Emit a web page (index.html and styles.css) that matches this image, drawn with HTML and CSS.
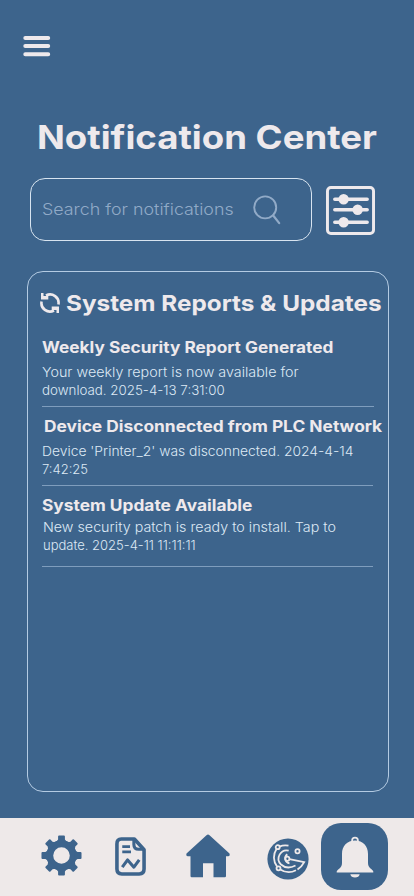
FILE: index.html
```html
<!DOCTYPE html>
<html lang="en">
<head>
<meta charset="utf-8">
<meta name="viewport" content="width=device-width, initial-scale=1">
<title>Notification Center</title>
<link rel="stylesheet" href="styles.css">
</head>
<body>
<div class="app">
  <header class="header">
    <svg class="menu" viewBox="0 0 28 22"><path d="M2.300 3h22.900M2.300 11h22.900M2.300 19.200h22.900" stroke="currentColor" stroke-width="4" stroke-linecap="round"/></svg>
    <h1><span class="fit title">Notification Center</span></h1>
  </header>
  <div class="tools">
    <div class="search">
      <span class="fit hint">Search for notifications</span>
      <svg class="lens" viewBox="0 0 28 30" fill="none" stroke="currentColor" stroke-width="1.9" stroke-linecap="round"><circle cx="12.2" cy="12.4" r="11"/><path d="M20.2 20.5l6 7.600" stroke-width="2.2"/></svg>
    </div>
    <svg class="filter" viewBox="0 0 50 50"><rect x="1.500" y="1.500" width="47" height="47" rx="3.500" fill="none" stroke="currentColor" stroke-width="3"/><path d="M9 13.500h33M9 24.200h33M9 37h33" stroke="currentColor" stroke-width="3.600" stroke-linecap="round"/><g fill="currentColor"><circle cx="18" cy="13.500" r="5.300"/><circle cx="32.300" cy="24.200" r="5.300"/><circle cx="18" cy="37" r="5.300"/></g></svg>
  </div>
  <main class="panel">
    <h2>
      <svg class="sync" viewBox="0 0 22 22" fill="none" stroke="currentColor" stroke-width="2.600"><path d="M7 3.500A8.500 8.500 0 0 1 19.400 12.600M15 18.500A8.500 8.500 0 0 1 2.600 9.400"/><path fill="currentColor" stroke="none" d="M2 1h2.500v3L9.300 4v3.400H2zM20 21h-2.500v-3L12.700 18v-3.400H20z"/></svg>
      <span class="fit section">System Reports &amp; Updates</span>
    </h2>
    <article class="item report">
      <h3><span class="fit">Weekly Security Report Generated</span></h3>
      <p><span class="fit lead">Your weekly report is now available for</span><br><span class="fit rest">download. 2025-4-13 7:31:00</span></p>
    </article>
    <article class="item device">
      <h3><span class="fit">Device Disconnected from PLC Network</span></h3>
      <p><span class="fit lead">Device 'Printer_2' was disconnected. 2024-4-14</span><br><span class="fit rest">7:42:25</span></p>
    </article>
    <article class="item update">
      <h3><span class="fit">System Update Available</span></h3>
      <p><span class="fit lead">New security patch is ready to install. Tap to</span><br><span class="fit rest">update. 2025-4-11 11:11:11</span></p>
    </article>
  </main>
  <nav class="nav">
    <svg class="gear" viewBox="-21 -21 42 42"><g fill="currentColor"><path fill-rule="evenodd" d="M0-15.500a15.500 15.500 0 1 0 0 31a15.500 15.500 0 0 0 0-31zm0 7a8.500 8.500 0 1 1 0 17a8.500 8.500 0 0 1 0-17z"/><g id="teeth"><path id="tooth" d="M-6-13l2.500-3.500v-3q0-1 1-1h5q1 0 1 1v3l2.500 3.500z"/><use href="#tooth" transform="rotate(45)"/><use href="#tooth" transform="rotate(90)"/><use href="#tooth" transform="rotate(135)"/></g><use href="#teeth" transform="rotate(180)"/></g></svg>
    <svg class="doc" viewBox="0 0 32 40" fill="none" stroke="currentColor" stroke-width="3.700" stroke-linejoin="round"><path d="M6.500 2H20l10 11v20q0 5-5 5H7q-5 0-5-5V7q0-5 4.500-5z"/><path d="M19.500 3v4.500q0 5 5 5H30" stroke-width="3.200"/><path d="M7.500 9.800h8M7.500 15.300h9" stroke-width="2.900"/><path d="M7.500 31l5.500-7.500 6.500 7.500 5.500-7.500" stroke-width="3.200"/></svg>
    <svg class="home" viewBox="0 0 44 44"><path fill="currentColor" d="M20.500 1.200q1.500-1.200 3 0L43.500 19.500q.8 2.800-1.500 2.800h-2V42q0 1.200-1.200 1.200H27.500V29.200H17V43.200H5.700q-1.200 0-1.200-1.200V22.300H2Q-.3 22.300.5 19.500z"/></svg>
    <svg class="radar" viewBox="0 0 42 42"><circle cx="21" cy="21" r="20.600" fill="currentColor"/><g fill="none" stroke="#eee9e9" stroke-width="1.800"><path d="M12.500 8.600Q16.500 6.800 21.500 7.700M9.500 11A15 15 0 0 0 10 28.500M13.300 31.500Q21 36.500 29 32.200M21.700 12.700A8.200 8.200 0 0 0 14 26.500Q20 32 28.500 27.500M20.300 16.300A5 5 0 0 0 22.500 25.300M22.400 21.100L37.200 24.200Q35 28.500 30.500 31.500"/><circle cx="10.700" cy="9.200" r="2"/><circle cx="30.500" cy="13.300" r="2.100"/><circle cx="20.300" cy="20.700" r="2.100"/><circle cx="11.500" cy="30.300" r="2"/></g></svg>
    <div class="active"><svg class="bell" viewBox="0 0 38 42"><circle cx="19" cy="4.500" r="2.900" fill="none" stroke="currentColor" stroke-width="1.700"/><path fill="currentColor" d="M19 4.500C27 4.500 32 10 32 18v9q0 4 3.500 6.300Q38 35.700 37.200 36.500H.8Q0 35.700 2.500 33.300 6 31 6 27v-9C6 10 11 4.500 19 4.500zM14.300 38.200h9.400q-.8 3.300-4.700 3.300t-4.700-3.300z"/></svg></div>
  </nav>
</div>
</body>
</html>
```
FILE: styles.css
```css
* { box-sizing: border-box; }
body { margin: 0; background: #3d648c; color: #eee9ec; font-family: Inter, "Liberation Sans", sans-serif; }
svg { display: block; flex: none; }
h1, h2, h3, p { margin: 0; }
.app { width: 414px; height: 896px; display: flex; flex-direction: column; overflow: hidden; }
.header { height: 177px; padding: 35px 0 0 23px; }
.menu { width: 28px; height: 22px; }
.fit { display: inline-block; white-space: nowrap; transform-origin: left center; }
.title { transform: scaleX(1.108); }
h1 { margin: 60px 0 0 14px; font-size: 33px; line-height: 40px; font-weight: 700; }
.tools { display: flex; align-items: center; padding-left: 30px; gap: 14px; height: 65px; }
.search { width: 282px; height: 63px; border: 1px solid #d8e4f0; border-radius: 15px; display: flex; align-items: center; padding-left: 11px; color: #91aac7; }
.hint { width: 211px; font-size: 16px; line-height: 24px; font-weight: 300; transform: translateY(-1px) scaleX(1.116); }
.lens { width: 28px; height: 30px; }
.filter { width: 49px; height: 49px; margin-top: 2px; }
.panel { width: 362px; height: 521px; margin: 29px 0 0 27px; padding: 17px 0 0 13px; border: 1px solid #b4cbe3; border-radius: 16px; }
h2 { display: flex; align-items: center; height: 27px; gap: 5px; font-size: 22px; font-weight: 700; }
.section { transform: scaleX(1.105); }
.sync { width: 22px; height: 22px; margin-left: -2px; }
.item { width: 332px; border-bottom: 1px solid #7f9dbd; margin-left: 1px; }
h3 { font-size: 15.5px; line-height: 20px; font-weight: 700; white-space: nowrap; }
p { font-size: 13px; line-height: 18px; font-weight: 300; color: #dde9f5; }
.report { height: 91px; padding-top: 22px; }
.report h3 .fit { transform: scaleX(1.113); }
.report p { margin-top: 5px; }
.report .lead { transform: scaleX(1.1); }
.report .rest { transform: scaleX(1.025); }
.device { width: 331px; height: 79px; padding-top: 10px; }
.device h3 { margin-left: 2px; }
.device h3 .fit { transform: scaleX(1.119); }
.device p { margin-top: 5px; }
.device .lead { transform: scaleX(1.065); }
.update { width: 331px; height: 81px; padding-top: 10px; }
.update h3 .fit { transform: scaleX(1.117); }
.update p { margin: 2px 0 0 1px; }
.update .lead { transform: scaleX(1.098); }
.nav { height: 78.5px; margin-top: auto; display: flex; align-items: center; background: #eee9e9; color: #3d648c; }
.gear { width: 41px; height: 41px; margin: 0 0 2px 41px; }
.doc { width: 31px; height: 39px; margin-left: 33px; }
.home { width: 44px; height: 44px; margin: 0 0 2px 40px; }
.radar { width: 42px; height: 42px; margin: 4px 0 0 37px; }
.active { width: 67px; height: 67px; margin-left: 12px; border-radius: 20px; background: #3d648c; color: #eee9e9; display: grid; place-items: center; }
.bell { width: 38px; height: 42px; }
```
